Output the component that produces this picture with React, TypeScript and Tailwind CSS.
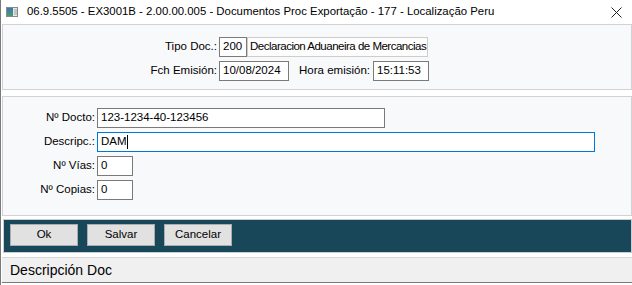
const font = { fontFamily: '"Liberation Sans", Arial, sans-serif' };

const Field = ({ value, w, active, soft }: { value: string; w: string; active?: boolean; soft?: boolean }) => (
  <div
    className={`${w} h-[20px] flex items-center text-[11.5px] text-black whitespace-nowrap overflow-hidden border ${
      active
        ? 'px-[3px] border-[#0078d7] bg-white'
        : soft
          ? 'pl-[2px] border-[#cdcdcd] bg-[#fdfdfd] tracking-[-0.5px]'
          : 'px-[3px] border-[#7a7a7a] bg-white'
    }`}
  >
    {value}
    {active && <span className="inline-block w-px h-[14px] bg-black" />}
  </div>
);

const WinIcon = () => (
  <svg width="12" height="10" viewBox="0 0 12 10">
    <defs>
      <linearGradient id="g" x1="0" y1="0" x2="0" y2="1">
        <stop offset="0" stopColor="#3a78b8" />
        <stop offset="1" stopColor="#4a9a6a" />
      </linearGradient>
    </defs>
    <rect x="0.5" y="0.5" width="11" height="9" fill="#e8e8e8" stroke="#8a8a8a" />
    <rect x="1" y="1" width="6" height="8" fill="url(#g)" />
    <rect x="8" y="2" width="3" height="6" fill="#c4c4c4" />
  </svg>
);

const Btn = ({ label }: { label: string }) => (
  <button className="w-[68px] h-[22px] bg-[#e1e1e1] border border-[#adadad] text-[11.5px] text-black">
    {label}
  </button>
);

export default function App() {
  return (
    <div style={font} className="w-[632px] h-[285px] bg-white border-l border-[#7a7a7a] flex flex-col">
      <div className="h-[24px] flex items-center pl-[5px] pr-[10px] text-[11.4px] text-black">
        <WinIcon />
        <span className="ml-[9px] flex-1 whitespace-nowrap">
          06.9.5505 - EX3001B - 2.00.00.005 - Documentos Proc Exportação - 177 - Localização Peru
        </span>
        <svg width="11" height="11" viewBox="0 0 11 11">
          <path d="M0.5 0.5 L10.5 10.5 M10.5 0.5 L0.5 10.5" stroke="#222" strokeWidth="1" />
        </svg>
      </div>

      <div className="ml-[1px] h-[66px] bg-[#f8f9fb] border border-[#d2d2d2] pt-[12px] flex flex-col gap-[4px] text-[11.5px] text-black whitespace-nowrap">
        <div className="flex items-center pl-[140px]">
          <div className="w-[76px] text-right pr-[2px]">Tipo Doc.:</div>
          <Field value="200" w="w-[28px]" />
          <Field value="Declaracion Aduaneira de Mercancias" w="w-[181px]" soft />
        </div>
        <div className="flex items-center pl-[140px]">
          <div className="w-[76px] text-right pr-[2px]">Fch Emisión:</div>
          <Field value="10/08/2024" w="w-[70px]" />
          <div className="w-[84px] text-right pr-[3px]">Hora emisión:</div>
          <Field value="15:11:53" w="w-[56px]" />
        </div>
      </div>

      <div className="ml-[1px] mt-[6px] h-[120px] bg-[#f8f9fb] border border-[#d2d2d2] pt-[11px] flex flex-col gap-[4px] text-[11.5px] text-black whitespace-nowrap">
        <div className="flex items-center">
          <div className="w-[94px] text-right pr-[2px]">Nº Docto:</div>
          <Field value="123-1234-40-123456" w="w-[288px]" />
        </div>
        <div className="flex items-center">
          <div className="w-[94px] text-right pr-[2px]">Descripc.:</div>
          <Field value="DAM" w="w-[498px]" active />
        </div>
        <div className="flex items-center">
          <div className="w-[94px] text-right pr-[2px]">Nº Vías:</div>
          <Field value="0" w="w-[36px]" />
        </div>
        <div className="flex items-center">
          <div className="w-[94px] text-right pr-[2px]">Nº Copias:</div>
          <Field value="0" w="w-[36px]" />
        </div>
      </div>

      <div className="ml-[2px] mt-[3px] h-[34px] bg-[#18475a] border border-[#c8cfd3] flex items-start pt-[4px] pl-[6px] gap-[9px]">
        <Btn label="Ok" />
        <Btn label="Salvar" />
        <Btn label="Cancelar" />
      </div>

      <div className="ml-[1px] mt-[4px] h-[26px] bg-[#f0f0f0] border-t border-[#d5d8da] border-b border-b-[#7a7a7a] flex items-center pl-[8px] text-[14px] text-black">
        Descripción Doc
      </div>
    </div>
  );
}
